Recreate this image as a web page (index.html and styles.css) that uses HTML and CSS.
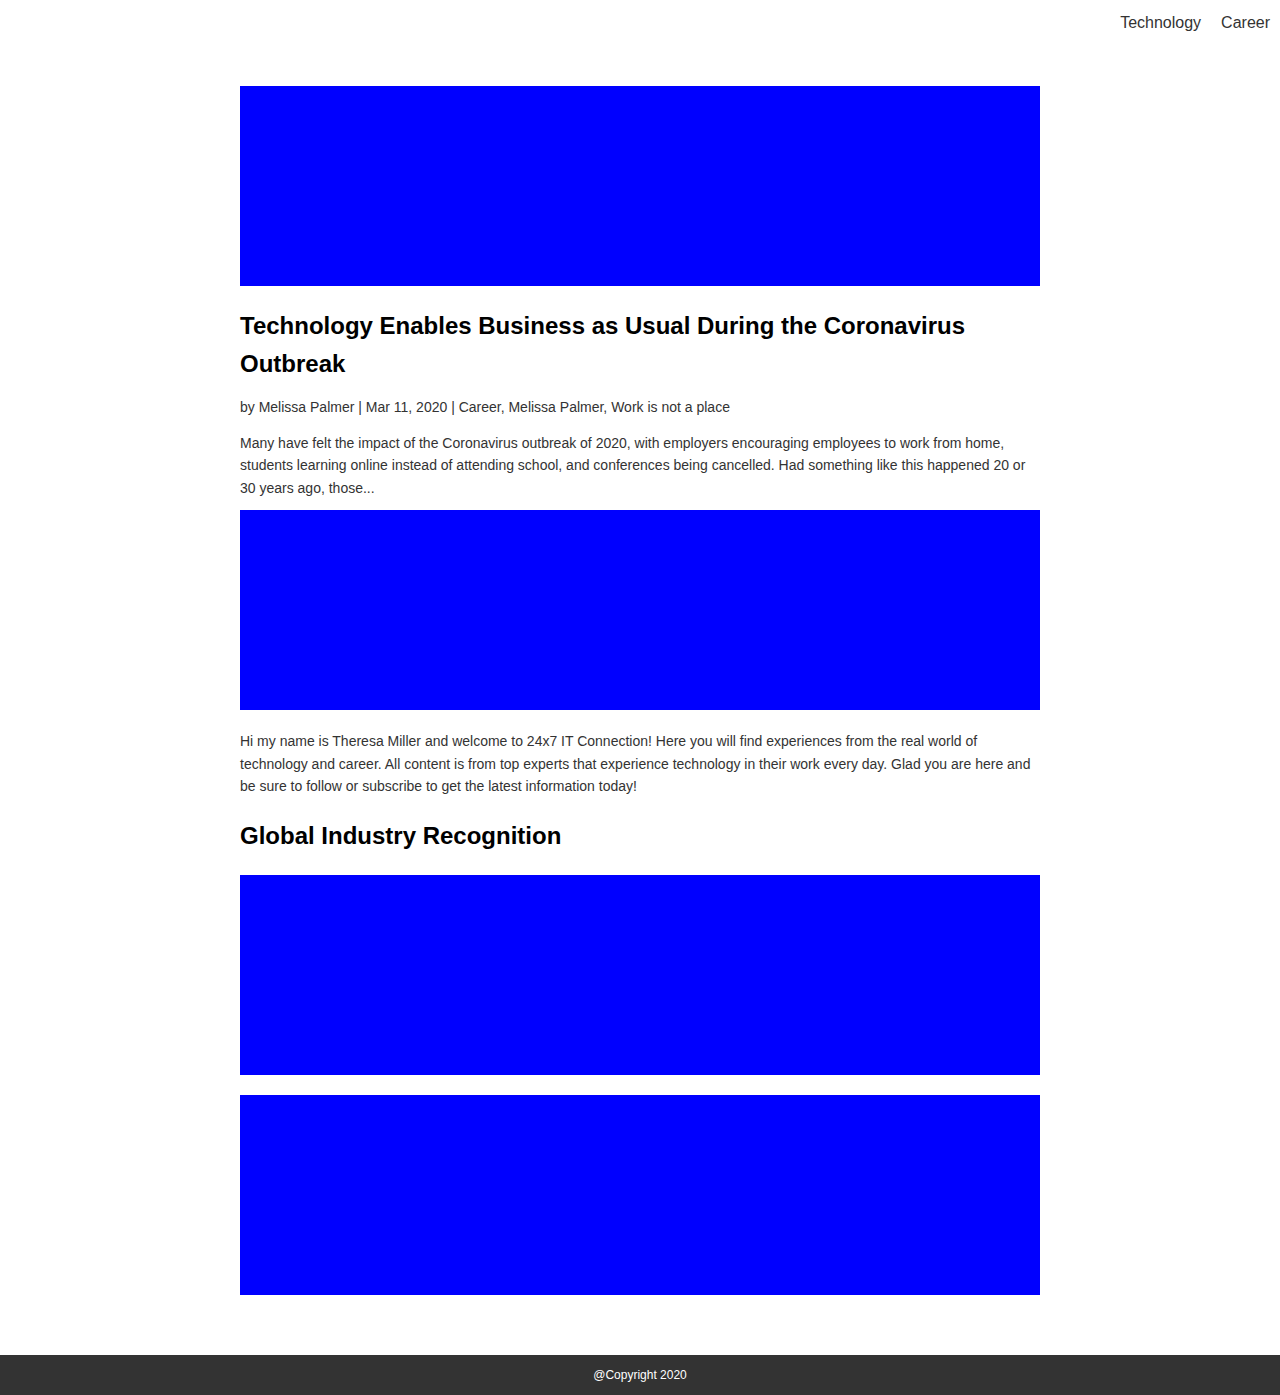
FILE: index.html
```html
<!DOCTYPE html>
<html lang="en">
<head>
<meta charset="utf-8">
<title>24x7 IT Connection</title>
<link rel="stylesheet" href="styles.css">
</head>
<body>
<header class="site-header">
  <nav class="nav">
    <a class="nav-link" href="#">Technology</a>
    <a class="nav-link" href="#">Career</a>
  </nav>
</header>
<main class="content">
  <article class="post">
    <div class="media"></div>
    <h2 class="post-title">Technology Enables Business as Usual During the Coronavirus Outbreak</h2>
    <p class="post-meta">by Melissa Palmer | Mar 11, 2020 | Career, Melissa Palmer, Work is not a place</p>
    <p class="post-excerpt">Many have felt the impact of the Coronavirus outbreak of 2020, with employers encouraging employees to work from home, students learning online instead of attending school, and conferences being cancelled. Had something like this happened 20 or 30 years ago, those...</p>
  </article>
  <div class="media"></div>
  <p class="intro">Hi my name is Theresa Miller and welcome to 24x7 IT Connection! Here you will find experiences from the real world of technology and career. All content is from top experts that experience technology in their work every day. Glad you are here and be sure to follow or subscribe to get the latest information today!</p>
  <h2 class="section-title">Global Industry Recognition</h2>
  <div class="gallery">
    <div class="media"></div>
    <div class="media"></div>
  </div>
</main>
<footer class="site-footer">@Copyright 2020</footer>
</body>
</html>
```
FILE: styles.css
```css
* { box-sizing: border-box; }
html, body { margin: 0; padding: 0; }
body {
  font-family: "Liberation Sans", Arial, sans-serif;
  color: #333;
  background: #fff;
}
.site-header {
  height: 46px;
  display: flex;
  justify-content: flex-end;
}
.nav {
  display: flex;
  gap: 20px;
  padding: 13px 10px 0 0;
}
.nav-link {
  color: #333;
  text-decoration: none;
  font-size: 16px;
  line-height: 20px;
}
.content {
  width: 800px;
  margin: 0 auto;
  padding: 40px 0 60px;
}
.media {
  height: 200px;
  background: #0000ff;
}
.post-title, .section-title {
  font-size: 24px;
  line-height: 38px;
  font-weight: bold;
  color: #000;
  margin: 0;
}
.post-title { margin-top: 21px; line-height: 37.5px; }
.post-meta {
  font-size: 14px;
  line-height: 22px;
  margin: 14px 0 14px;
}
.post-excerpt {
  font-size: 14px;
  line-height: 22.4px;
  margin: 0 0 11px;
}
.intro {
  font-size: 14px;
  line-height: 22.4px;
  margin: 20px 0 20px;
}
.section-title { margin-bottom: 20px; }
.gallery {
  display: flex;
  flex-direction: column;
  gap: 20px;
}
.site-footer {
  height: 40px;
  background: #333;
  color: #fff;
  font-size: 12px;
  display: flex;
  align-items: center;
  justify-content: center;
}
```
